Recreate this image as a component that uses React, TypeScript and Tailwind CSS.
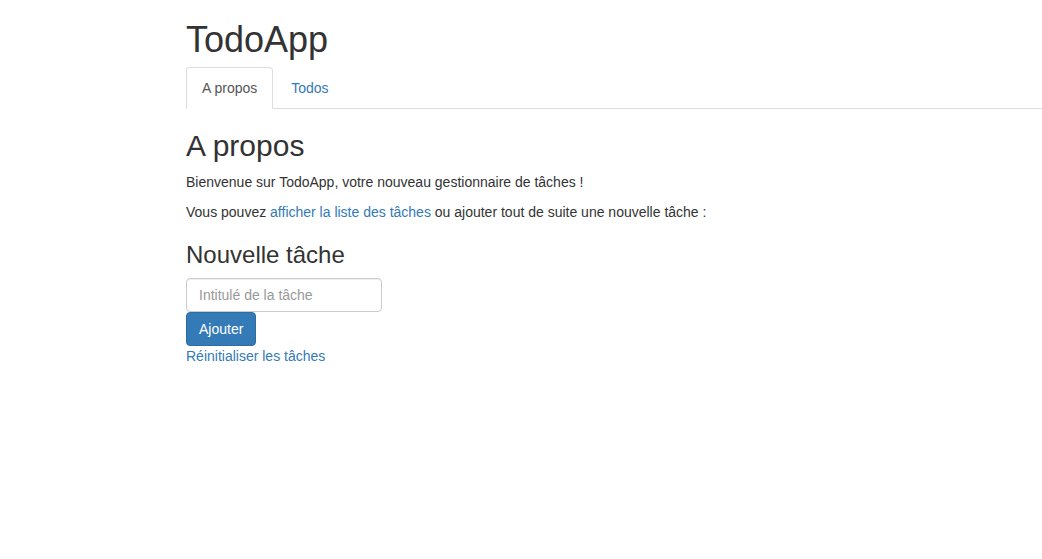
import React from "react";

export default function App() {
  return (
    <div
      className="min-h-[559px] bg-white text-[#333] text-[14px] leading-[20px]"
      style={{ fontFamily: '"Liberation Sans", Arial, sans-serif' }}
    >
      <div className="pl-[186px]">
        <h1 className="text-[36px] leading-[1.1] mt-[20px] mb-[7px] font-normal">TodoApp</h1>
        <ul className="flex border-b border-[#ddd]">
          <li className="-mb-px mr-[2px]">
            <a className="block px-[15px] py-[10px] leading-[20px] border border-[#ddd] border-b-transparent rounded-t-[4px] bg-white text-[#555]">
              A propos
            </a>
          </li>
          <li className="-mb-px mr-[2px]">
            <a className="block px-[15px] py-[10px] leading-[20px] border border-transparent rounded-t-[4px] text-[#337ab7]">
              Todos
            </a>
          </li>
        </ul>
        <h2 className="text-[30px] leading-[1.1] mt-[20px] mb-[10px] font-normal">A propos</h2>
        <p className="mb-[10px]">Bienvenue sur TodoApp, votre nouveau gestionnaire de tâches !</p>
        <p className="mb-[10px]">
          Vous pouvez <a className="text-[#337ab7]">afficher la liste des tâches</a> ou ajouter tout de suite une nouvelle tâche :
        </p>
        <h3 className="text-[24px] leading-[1.1] mt-[20px] mb-[10px] font-normal">Nouvelle tâche</h3>
        <form className="flex flex-col items-start" onSubmit={(e) => e.preventDefault()}>
          <input
            type="text"
            placeholder="Intitulé de la tâche"
            className="w-[196px] h-[34px] px-[12px] py-[6px] text-[14px] leading-[20px] text-[#555] bg-white border border-[#ccc] rounded-[4px] shadow-[inset_0_1px_1px_rgba(0,0,0,0.075)] placeholder:text-[#999] outline-none"
          />
          <button
            type="submit"
            className="h-[34px] px-[12px] py-[6px] text-[14px] leading-[20px] text-white bg-[#337ab7] border border-[#2e6da4] rounded-[4px]"
          >
            Ajouter
          </button>
        </form>
        <a className="block text-[#337ab7]">Réinitialiser les tâches</a>
      </div>
    </div>
  );
}
